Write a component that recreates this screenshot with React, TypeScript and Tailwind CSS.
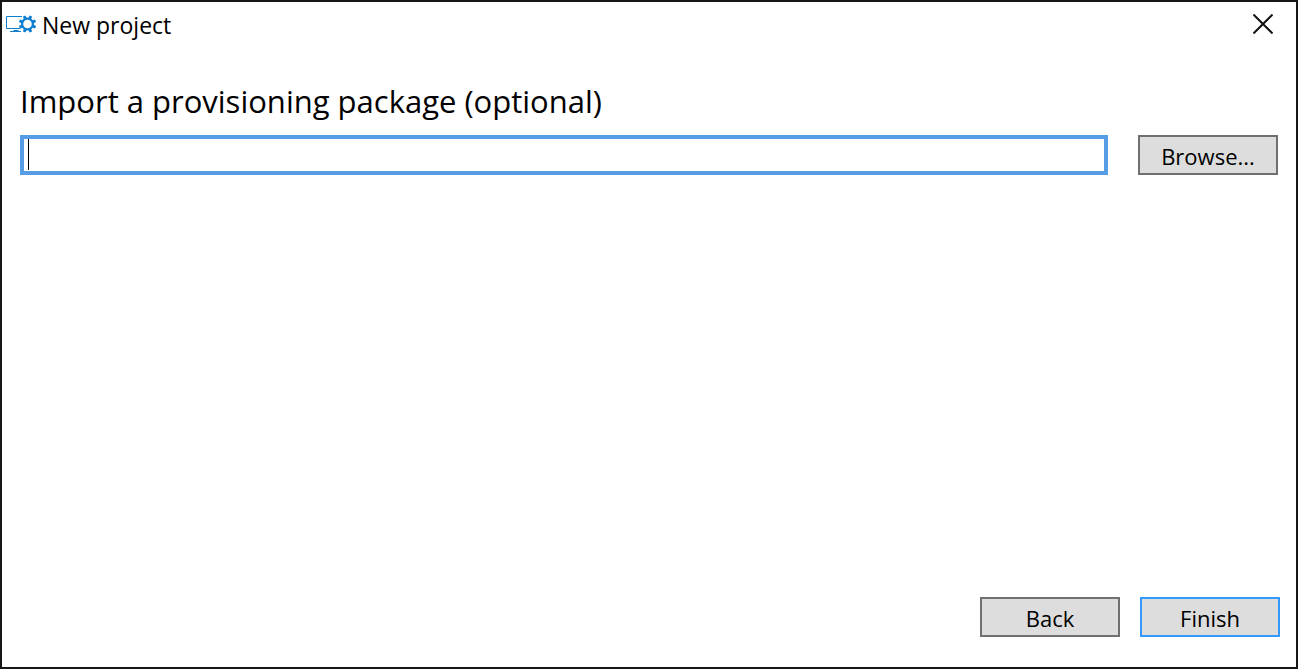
import { useId } from "react";
import type { ButtonHTMLAttributes } from "react";
import { clsx } from "clsx";

function AppIcon() {
  const teeth = [0, 45, 90, 135, 180, 225, 270, 315];
  return (
    <svg className="h-[18px] w-[30px] shrink-0" viewBox="0 0 30 18" fill="none" aria-hidden="true">
      <path d="M16 1.5H0.5v12H14.5" stroke="#0f7fd0" />
      <path d="M7.5 15.5h5M4 16.5h11" stroke="#0f7fd0" />
      <circle cx="21.5" cy="9" r="5.4" stroke="#0f7fd0" strokeWidth="2.2" />
      {teeth.map((angle) => (
        <path
          key={angle}
          d="M19.9 3.6 20.1 0.3h2.8l0.2 3.3z"
          fill="#0f7fd0"
          transform={`rotate(${angle + 22.5} 21.5 9)`}
        />
      ))}
    </svg>
  );
}

type DialogButtonProps = ButtonHTMLAttributes<HTMLButtonElement> & { primary?: boolean };

function DialogButton({ primary = false, ...props }: DialogButtonProps) {
  return (
    <button
      type="button"
      className={clsx(
        "flex h-10 w-[140px] shrink-0 items-center justify-center border-2 bg-[#dddddd] pt-0.5 text-[22px] leading-8 outline-none",
        primary ? "border-[#3399ff]" : "border-[#707070]",
      )}
      {...props}
    />
  );
}

export default function App() {
  const packageId = useId();
  return (
    <div className="flex min-h-screen flex-col border-2 border-[#161616] bg-white font-['Open_Sans','Noto_Sans',sans-serif] text-black">
      <header className="flex h-11 items-center justify-between pr-[21px] pl-1">
        <div className="flex items-center gap-1.5">
          <AppIcon />
          <h1 className="pt-0.5 text-[23px] leading-8">New project</h1>
        </div>
        <button type="button" aria-label="Close" className="flex size-6 items-center justify-center">
          <svg className="size-5" viewBox="0 0 20 20" fill="none" aria-hidden="true">
            <path d="M0.5 0.5 19.5 19.5M19.5 0.5 0.5 19.5" stroke="#111111" strokeWidth="2" />
          </svg>
        </button>
      </header>

      <main className="flex flex-1 flex-col px-[18px] pt-[35px]">
        <label htmlFor={packageId} className="text-[31px] leading-10">
          Import a provisioning package (optional)
        </label>
        <div className="mt-[14px] flex gap-[30px]">
          <div className="relative min-w-0 flex-1">
            <input
              id={packageId}
              type="text"
              className="block h-10 w-full border-4 border-[#569de5] bg-white px-1 text-[22px] caret-transparent outline-none"
            />
            <span aria-hidden="true" className="absolute top-1 left-2 h-[31px] w-px bg-black" />
          </div>
          <DialogButton>Browse...</DialogButton>
        </div>
      </main>

      <footer className="flex justify-end gap-5 px-4 pb-[30px]">
        <DialogButton>Back</DialogButton>
        <DialogButton primary>Finish</DialogButton>
      </footer>
    </div>
  );
}
